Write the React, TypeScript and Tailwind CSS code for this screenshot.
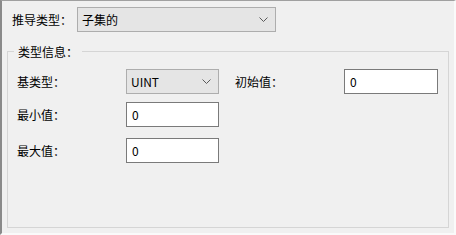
import React from 'react';

const font = { fontFamily: '"Noto Sans CJK SC", "Noto Sans", sans-serif' };

function Chevron() {
  return (
    <svg width="9" height="5" viewBox="0 0 9 5" className="shrink-0">
      <path d="M0.5 0.5 L4.5 4.5 L8.5 0.5" fill="none" stroke="#5a5a5a" strokeWidth="1" />
    </svg>
  );
}

function Combo({ value, width }: { value: string; width: string }) {
  return (
    <div
      className={`${width} h-[25px] flex items-center justify-between bg-[#e5e5e5] border border-[#adadad] pl-[4px] pr-[7px] text-[12px] text-black`}
    >
      <span>{value}</span>
      <Chevron />
    </div>
  );
}

function TextBox({ value, width }: { value: string; width: string }) {
  return (
    <div className={`${width} h-[25px] flex items-center bg-white border border-[#7a7a7a] pl-[5px] text-[12px] text-black`}>
      {value}
    </div>
  );
}

export default function App() {
  return (
    <div
      style={font}
      className="w-[456px] h-[235px] bg-[#f0f0f0] border-l-2 border-t border-r-2 border-b-2 border-l-[#8a8a8a] border-t-[#a0a0a0] border-r-[#fafafa] border-b-[#fafafa] pt-[6px] pl-[5px] text-[12px] text-black leading-[17px]"
    >
      {/* top row */}
      <div className="flex items-center">
        <span className="w-[70px] pl-[5px]">推导类型：</span>
        <Combo value="子集的" width="w-[199px]" />
      </div>

      {/* group box */}
      <fieldset className="mt-[11px] w-[442px] h-[185px] border border-[#d5d5d5] pl-[9px] pt-[9px]">
        <legend className="-ml-[3px] px-[4px] leading-[17px]">类型信息：</legend>

        <div className="flex items-center">
          <span className="w-[109px]">基类型：</span>
          <Combo value="UINT" width="w-[93px]" />
          <span className="ml-[16px] w-[109px]">初始值：</span>
          <TextBox value="0" width="w-[94px]" />
        </div>
        <div className="flex items-center mt-[8px]">
          <span className="w-[109px]">最小值：</span>
          <TextBox value="0" width="w-[93px]" />
        </div>
        <div className="flex items-center mt-[11px]">
          <span className="w-[109px]">最大值：</span>
          <TextBox value="0" width="w-[93px]" />
        </div>
      </fieldset>
    </div>
  );
}
